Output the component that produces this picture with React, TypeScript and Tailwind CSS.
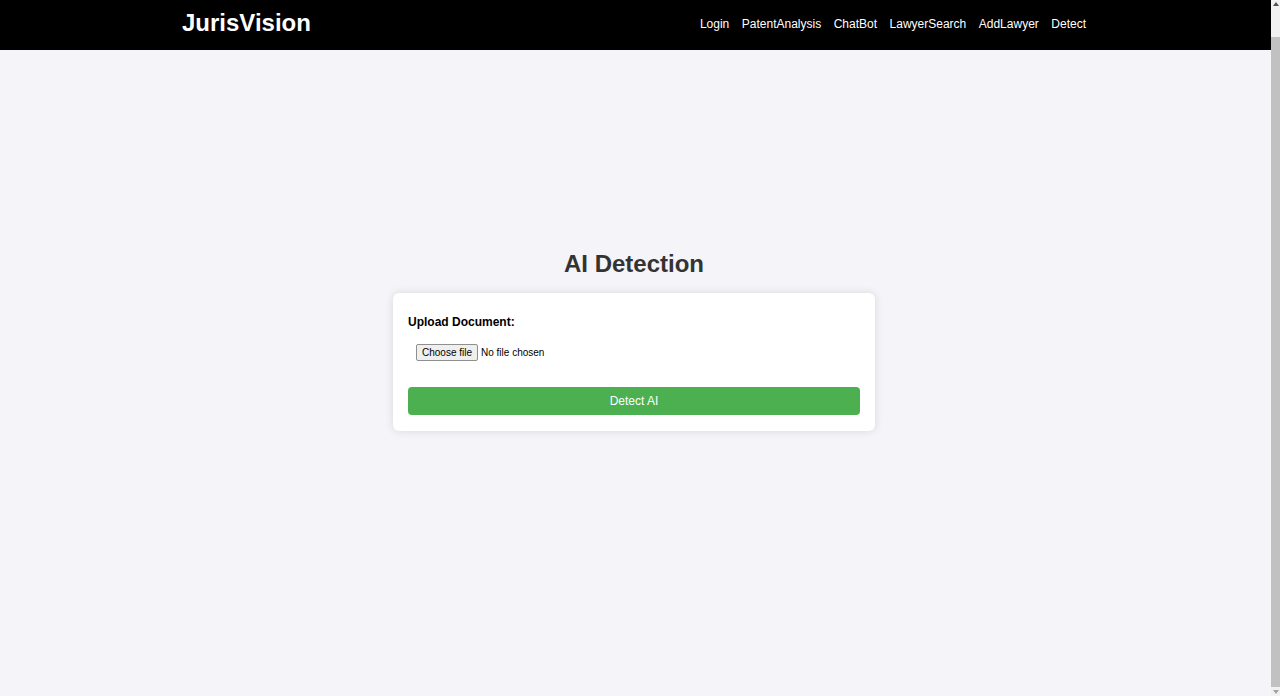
import { useRef, useState } from "react";

const links = ["Login", "PatentAnalysis", "ChatBot", "LawyerSearch", "AddLawyer", "Detect"];

export default function App() {
  const [fileName, setFileName] = useState<string>("");
  const inputRef = useRef<HTMLInputElement>(null);

  return (
    <div className="flex h-screen overflow-hidden bg-[#f4f4f9] font-['Liberation_Sans',Arial,sans-serif]">
      <div className="min-w-0 flex-1">
        <nav className="flex h-[50px] items-center justify-between bg-black pr-[185px] pb-1 pl-[182px]">
          <a href="#" className="text-[24px] font-bold leading-none text-white">
            JurisVision
          </a>
          <ul className="flex gap-[12.5px]">
            {links.map((link) => (
              <li key={link}>
                <a href="#" className="text-[12px] text-white">
                  {link}
                </a>
              </li>
            ))}
          </ul>
        </nav>

        <main className="flex flex-col items-center pt-[200px] pr-[3px]">
          <h2 className="mb-[15px] text-[24px] font-bold leading-[28px] text-[#333]">AI Detection</h2>
          <form
            onSubmit={(e) => e.preventDefault()}
            className="w-[482px] rounded-[6px] bg-white px-[15px] pt-[20px] pb-4 shadow-[0_0_8px_rgba(0,0,0,0.12)]"
          >
            <label htmlFor="doc" className="block text-[12px] font-bold leading-[18px] text-black">
              Upload Document:
            </label>
            <div className="mt-[5px] flex items-center p-2 text-[10px] leading-[13px] text-black">
              <input
                id="doc"
                ref={inputRef}
                type="file"
                className="hidden"
                onChange={(e) => setFileName(e.target.files?.[0]?.name ?? "")}
              />
              <button
                type="button"
                onClick={() => inputRef.current?.click()}
                className="mr-[3px] rounded-[2px] border border-[#8f8f8f] bg-[#efefef] px-[5px] py-[1px]"
              >
                Choose file
              </button>
              <span>{fileName || "No file chosen"}</span>
            </div>
            <button
              type="submit"
              className="mt-[18px] h-[28px] w-full rounded-[4px] bg-[#4caf50] text-[12px] text-white"
            >
              Detect AI
            </button>
          </form>
        </main>
      </div>

      {/* page scrollbar */}
      <div className="flex w-[9px] flex-col items-center bg-[#f1f1f1]">
        <div className="mt-[2px] h-0 w-0 border-x-[3px] border-b-[4px] border-x-transparent border-b-[#505050]" />
        <div className="mt-[31px] w-full flex-1 bg-[#c1c1c1]" />
        <div className="mt-[3px] mb-[2px] h-0 w-0 border-x-[3px] border-t-[4px] border-x-transparent border-t-[#a3a3a3]" />
      </div>
    </div>
  );
}
